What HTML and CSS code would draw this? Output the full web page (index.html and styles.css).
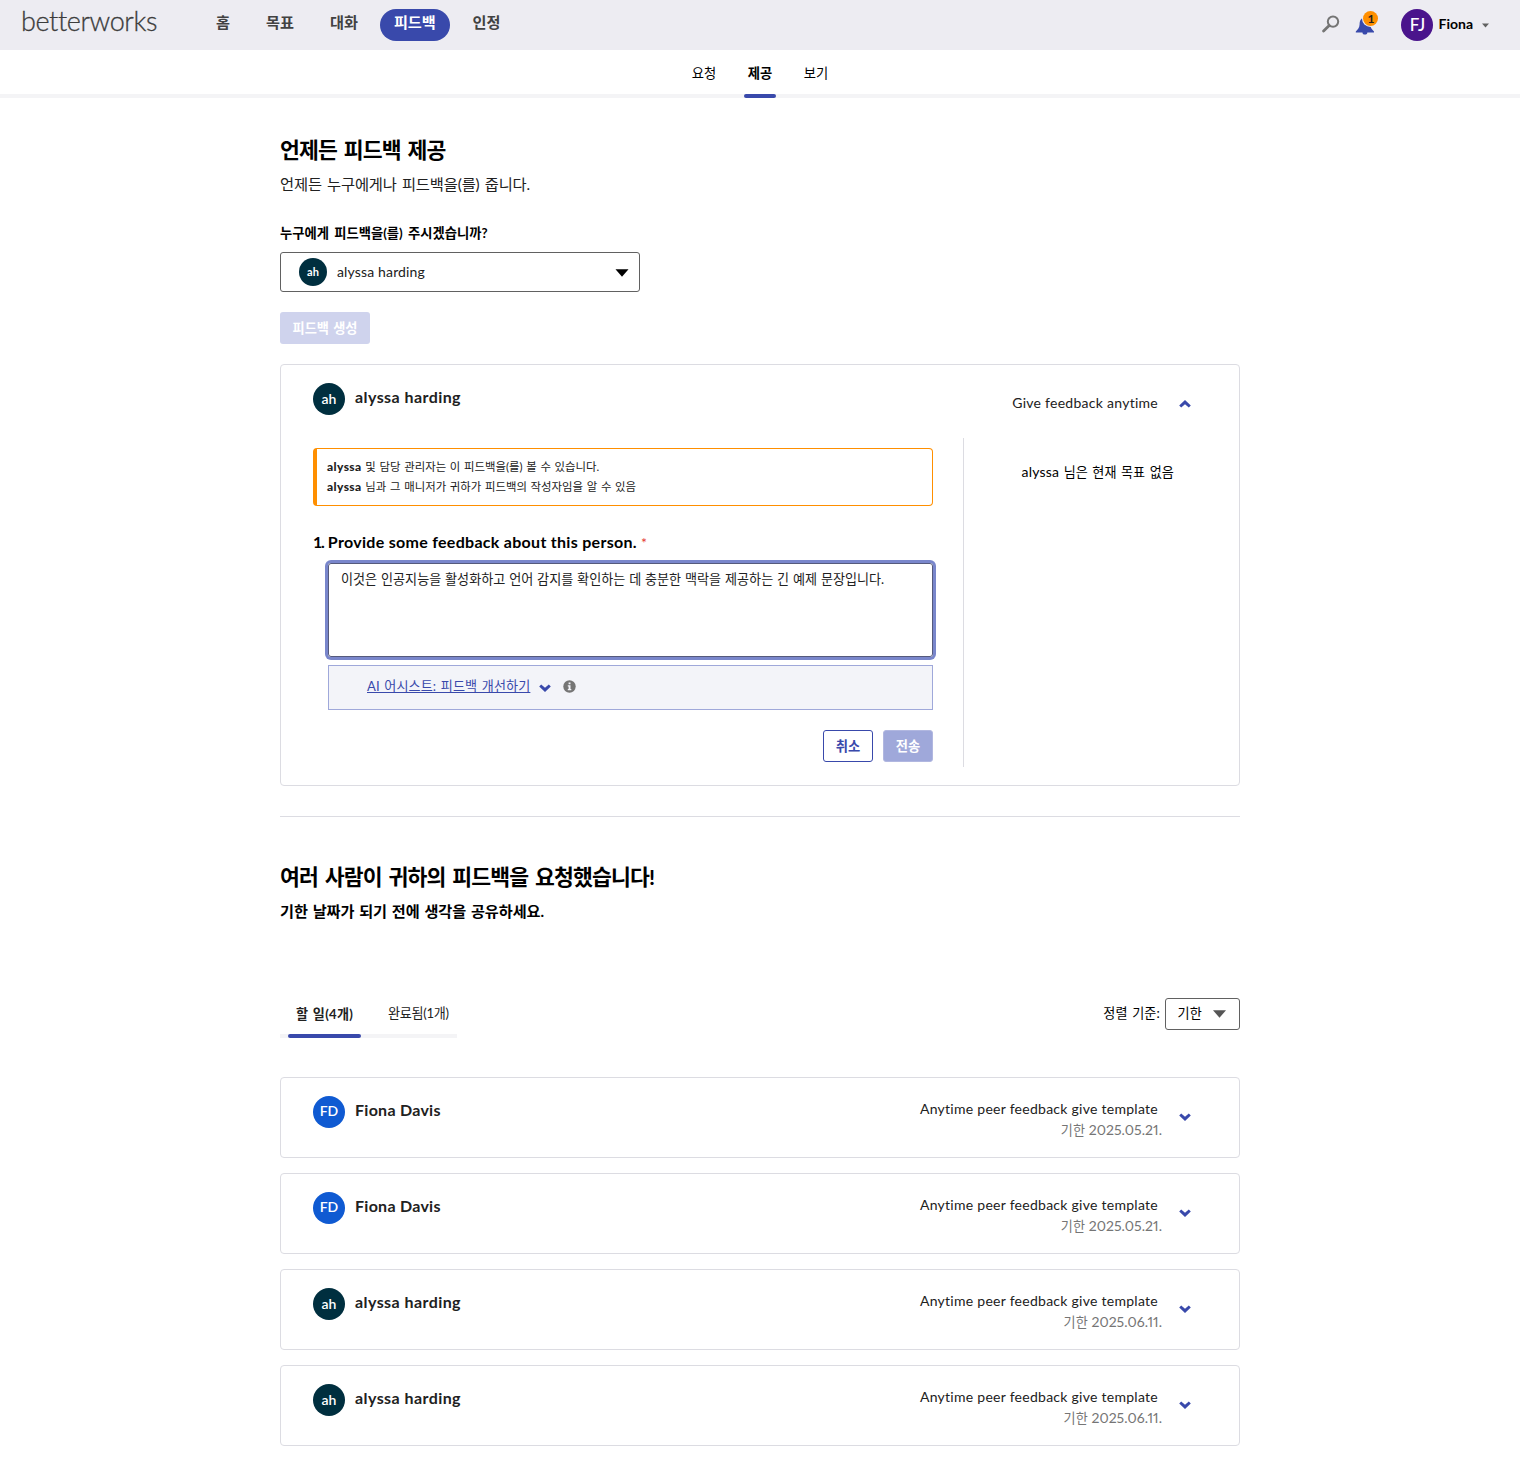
FILE: index.html
```html
<!DOCTYPE html>
<html lang="ko">
<head>
<meta charset="utf-8">
<title>Betterworks</title>
<link rel="stylesheet" href="styles.css">
</head>
<body>
<svg class="sprite" width="0" height="0" aria-hidden="true">
  <symbol id="chevron" viewBox="0 0 12 8"><path d="M0.2 2.4 L2.2 0.4 L6 3.8 L9.8 0.4 L11.8 2.4 L6 8 Z"/></symbol>
</svg>
<header class="topbar">
  <a class="logo">betterworks</a>
  <nav class="mainnav">
    <a>홈</a><a>목표</a><a>대화</a><a class="active">피드백</a><a>인정</a>
  </nav>
  <div class="tools">
    <svg class="search" width="18" height="18" viewBox="0 0 18 18"><circle cx="11" cy="6.6" r="5.2" fill="none" stroke="#757575" stroke-width="2"/><path d="M7.2 10.6 L1.6 16" stroke="#757575" stroke-width="2.8" stroke-linecap="round"/></svg>
    <div class="bell">
      <svg width="20" height="19" viewBox="0 0 20 19"><path d="M8.3 1.8 a1.6 1.6 0 0 1 3 0 C14.4 2.6 15 5.4 15.2 8.2 C15.4 11.6 16.6 13 19 15.4 V16.4 H0.8 V15.4 C3.2 13 4.4 11.6 4.6 8.2 C4.8 5.4 5.4 2.6 8.3 1.8 Z M7.4 16 H12.4 a2.5 2.6 0 0 1 -5 0 Z" fill="#3949ab"/></svg>
      <span class="count">1</span>
    </div>
    <span class="avatar purple">FJ</span>
    <span class="user">Fiona</span>
    <svg class="caret" width="7" height="5" viewBox="0 0 7 5"><path d="M0 .4 H7 L3.5 4.6 Z" fill="#616161"/></svg>
  </div>
</header>
<nav class="subnav">
  <a>요청</a><a class="active">제공</a><a>보기</a>
</nav>
<main class="page">
  <h1>언제든 피드백 제공</h1>
  <p class="lead">언제든 누구에게나 피드백을(를) 줍니다.</p>
  <label class="label">누구에게 피드백을(를) 주시겠습니까?</label>
  <div class="picker">
    <span class="avatar small">ah</span><span class="picked">alyssa harding</span>
    <svg width="14" height="8" viewBox="0 0 14 8"><path d="M0.5 0.3 H13.5 L7 7.8 Z"/></svg>
  </div>
  <button class="create">피드백 생성</button>

  <section class="card open">
    <div class="person"><span class="avatar">ah</span><span class="name">alyssa harding</span></div>
    <div class="summary"><span class="template">Give feedback anytime</span></div>
    <svg class="chev up"><use href="#chevron"/></svg>
    <div class="form">
      <div class="notice">
        <div><b>alyssa</b> 및 담당 관리자는 이 피드백을(를) 볼 수 있습니다.</div>
        <div><b>alyssa</b> 님과 그 매니저가 귀하가 피드백의 작성자임을 알 수 있음</div>
      </div>
      <div class="question"><span class="num">1.</span> Provide some feedback about this person. <span class="req">*</span></div>
      <div class="answer">이것은 인공지능을 활성화하고 언어 감지를 확인하는 데 충분한 맥락을 제공하는 긴 예제 문장입니다.</div>
      <div class="assist">
        <a>AI 어시스트: 피드백 개선하기</a>
        <svg class="chev down"><use href="#chevron"/></svg>
        <svg class="info" width="13" height="13" viewBox="0 0 13 13"><circle cx="6.5" cy="6.5" r="6.2" fill="#757575"/><path d="M5.6 2.4 H7.5 V4.2 H5.6 Z M4.8 5.2 H7.5 V9 H8.3 V10.3 H4.8 V9 H5.6 V6.4 H4.8 Z" fill="#f3f4f9"/></svg>
      </div>
      <div class="actions"><button class="cancel">취소</button><button class="send">전송</button></div>
    </div>
    <aside class="goals"><span class="who">alyssa</span> 님은 현재 목표 없음</aside>
  </section>

  <hr>
  <h2>여러 사람이 귀하의 피드백을 요청했습니다!</h2>
  <p class="sub">기한 날짜가 되기 전에 생각을 공유하세요.</p>

  <div class="filter">
    <div class="tabs"><a class="active">할 일(4개)</a><a class="done">완료됨(1개)</a></div>
    <div class="sort"><span>정렬 기준:</span>
      <div class="sortbox"><span>기한</span><svg width="13" height="8" viewBox="0 0 13 8"><path d="M0 0.3 H13 L6.5 7.8 Z" fill="#555"/></svg></div>
    </div>
  </div>

  <div class="requests">
    <section class="card row"><div class="person"><span class="avatar blue">FD</span><span class="name">Fiona Davis</span></div><div class="summary"><span class="template">Anytime peer feedback give template</span><span class="due"><span class="ko">기한</span> 2025.05.21.</span></div><svg class="chev"><use href="#chevron"/></svg></section>
    <section class="card row"><div class="person"><span class="avatar blue">FD</span><span class="name">Fiona Davis</span></div><div class="summary"><span class="template">Anytime peer feedback give template</span><span class="due"><span class="ko">기한</span> 2025.05.21.</span></div><svg class="chev"><use href="#chevron"/></svg></section>
    <section class="card row"><div class="person"><span class="avatar">ah</span><span class="name">alyssa harding</span></div><div class="summary"><span class="template">Anytime peer feedback give template</span><span class="due"><span class="ko">기한</span> 2025.06.11.</span></div><svg class="chev"><use href="#chevron"/></svg></section>
    <section class="card row"><div class="person"><span class="avatar">ah</span><span class="name">alyssa harding</span></div><div class="summary"><span class="template">Anytime peer feedback give template</span><span class="due"><span class="ko">기한</span> 2025.06.11.</span></div><svg class="chev"><use href="#chevron"/></svg></section>
  </div>
</main>
</body>
</html>
```
FILE: styles.css
```css
* { box-sizing: border-box; }
body { margin: 0; background: #fff; color: #000; font: 13.1px/20px Lato, "Noto Sans CJK KR", sans-serif; }
h1, h2, p { margin: 0; }
b { font-weight: 900; font-size: 12px; letter-spacing: 0.4px; }
button { font: inherit; padding: 0; }
.sprite { display: block; position: absolute; }
.topbar { height: 50px; background: #edecf2; display: flex; align-items: flex-start; padding-left: 21px; }
.logo { width: 181px; padding-top: 6px; font-size: 27px; line-height: 30px; font-weight: 300; color: #3c3c3c; letter-spacing: -0.4px; -webkit-text-stroke: 0.3px #3c3c3c; }
.mainnav { display: flex; gap: 8px; padding-top: 9px; }
.mainnav a { height: 32px; line-height: 27px; padding: 0 14px; border-radius: 16px; font-size: 15.2px; font-weight: 700; color: #424242; }
.mainnav .active { background: #3949ab; color: #fff; padding-right: 14.6px; }
.tools { margin-left: auto; display: flex; align-items: center; height: 50px; padding-right: 31px; }
.search { margin-top: -2px; margin-right: 15px; }
.bell { position: relative; width: 20px; height: 19px; margin-right: 26px; }
.bell svg { display: block; }
.count { position: absolute; left: 8px; top: -5px; width: 15px; height: 15px; border-radius: 50%; background: #ff8f00; box-shadow: 0 0 0 1px #edecf2; font-size: 12px; line-height: 15px; font-weight: 700; text-align: center; color: #212121; }
.avatar { width: 32px; height: 32px; flex: none; border-radius: 50%; background: #002f3f; color: #fff; font-size: 14px; line-height: 32px; font-weight: 600; text-align: center; }
.avatar.small { width: 28px; height: 28px; line-height: 27px; font-size: 11px; font-weight: 700; }
.avatar.blue { background: #0f5ad2; line-height: 30px; }
.avatar.purple { background: #4a148c; font-size: 17px; font-weight: 500; }
.user { margin: -2px 0 0 5px; font-size: 14px; font-weight: 700; }
.caret { margin-left: 9px; }

.subnav { height: 48px; border-bottom: 4px solid #f4f4f6; display: flex; justify-content: center; gap: 24px; }
.subnav a { height: 48px; width: 32px; text-align: center; line-height: 46px; font-size: 13.3px; }
.subnav .active { font-weight: 700; position: relative; }
.subnav .active::after { content: ""; position: absolute; left: 0; top: 44px; width: 32px; height: 4px; border-radius: 2px; background: #3949ab; }

.page { width: 960px; margin: 0 auto; padding-top: 37px; }
h1, h2 { font-size: 21.6px; line-height: 30px; font-weight: 700; letter-spacing: -0.85px; word-spacing: 2.3px; }
.lead { margin-top: 7px; font-size: 15.3px; line-height: 24px; letter-spacing: -0.13px; word-spacing: 1.4px; color: #212121; }
.label { display: block; margin-top: 27px; font-size: 13.3px; font-weight: 700; word-spacing: 2.1px; }
.picker { margin-top: 9px; width: 360px; height: 40px; border: 1px solid #616161; border-radius: 3px; display: flex; align-items: center; padding: 0 10px 0 18px; }
.picker svg { margin-top: 2px; }
.picked { margin-left: 10px; margin-right: auto; font-size: 14px; letter-spacing: 0.15px; color: #212121; }
.create { display: block; margin-top: 20px; width: 90px; height: 32px; border: 0; border-radius: 3px; background: #cfd3ed; color: #fff; font-weight: 700; font-size: 13.2px; word-spacing: 1px; }

.card { border: 1px solid #dcdce2; border-radius: 4px; background: #fff; display: grid; grid-template-columns: 1fr auto 12px; padding: 18px 48px 0 32px; }
.person { display: flex; }
.name { margin-left: 10px; font-size: 16px; line-height: 28px; font-weight: 700; letter-spacing: 0.43px; color: #212121; }
.blue + .name { letter-spacing: 0.27px; }
.summary { display: flex; flex-direction: column; align-items: flex-end; padding: 3px 17px 0 0; font-size: 14px; color: #212121; }
.template { margin-right: 4px; letter-spacing: 0.27px; }
.due { margin-top: 1px; color: #757575; font-variant-numeric: proportional-nums; letter-spacing: 0.05px; }
.ko { font-size: 13.1px; }
.chev { width: 12px; height: 8px; fill: #3949ab; }
.row { height: 81px; }
.row .chev, .chev.up { margin-top: 17px; }
.requests { display: grid; gap: 15px; margin-top: 39px; }

.open { margin-top: 20px; height: 422px; grid-template-columns: 650px 1fr auto 12px; grid-template-rows: 55px 329px; }
.open .person { grid-column: 1; }
.open .summary { grid-column: 3; padding-top: 10px; }
.chev.up { transform: rotate(180deg); }
.form { grid-column: 1; padding: 10px 30px 0 0; }
.notice { height: 58px; border: 1px solid #ff8f00; border-left-width: 4px; border-radius: 4px; padding: 8px 10px; font-size: 11.4px; word-spacing: 0.8px; color: #212121; }
.question { height: 20px; margin-top: 26px; font-size: 16px; font-weight: 700; letter-spacing: 0.29px; white-space: nowrap; }
.num { letter-spacing: -1.2px; }
.req { color: #e53935; font-size: 14px; font-weight: 400; }
.answer { margin: 11px 0 0 15px; height: 94px; border: 1px solid #555a7c; border-radius: 3px; box-shadow: 0 0 0 3px #7986cb; padding: 5px 12px; word-spacing: 0.5px; white-space: nowrap; color: #212121; }
.assist { margin: 8px 0 0 15px; height: 45px; border: 1px solid #9fa8da; background: #f3f4f9; display: flex; align-items: center; padding-left: 38px; }
.assist a { width: 164px; margin-top: -3px; white-space: nowrap; color: #3949ab; text-decoration: underline; letter-spacing: 0.1px; word-spacing: 1.1px; }
.down { margin: 1px 12px 0 7.5px; }
.info { margin-top: -2px; }
.actions { display: flex; justify-content: flex-end; gap: 10px; margin-top: 20px; }
.actions button { width: 50px; height: 32px; border: 1px solid #3949ab; border-radius: 3px; background: #fff; color: #3949ab; font-weight: 700; font-size: 13.3px; }
.actions .send { background: #9fa8da; border-color: #b1b7e0; color: #fff; }
.goals { grid-column: 2 / 5; border-left: 1px solid #dcdce2; padding: 24px 0 0 57.5px; word-spacing: 1.2px; }
.who { font-size: 14px; letter-spacing: 0.2px; }
hr { margin: 30px 0 45px; border: 0; height: 1px; background: #dcdce2; }
.sub { margin-top: 7px; font-size: 15.2px; line-height: 24px; font-weight: 700; letter-spacing: -0.07px; word-spacing: 1.2px; }

.filter { margin-top: 75px; height: 40px; display: flex; justify-content: space-between; }
.tabs { position: relative; display: flex; height: 40px; width: 177px; border-bottom: 4px solid #f4f4f6; padding-left: 8px; color: #212121; }
.tabs .done { line-height: 30px; padding-left: 27px; letter-spacing: -0.3px; white-space: nowrap; }
.tabs .active { position: relative; width: 73px; height: 40px; line-height: 32px; padding-left: 8px; font-weight: 700; letter-spacing: 0.3px; word-spacing: 1px; }
.tabs .active::after { content: ""; position: absolute; left: 0; bottom: 0; width: 73px; height: 4px; border-radius: 2px; background: #3949ab; }
.sort { display: flex; gap: 5px; line-height: 30px; word-spacing: 1px; letter-spacing: 0.15px; }
.sortbox { width: 75px; height: 32px; border: 1px solid #616161; border-radius: 3px; display: flex; align-items: center; justify-content: space-between; padding: 0 13px 0 11.5px; line-height: 20px; }
.sortbox span { margin-top: -3px; }
```
